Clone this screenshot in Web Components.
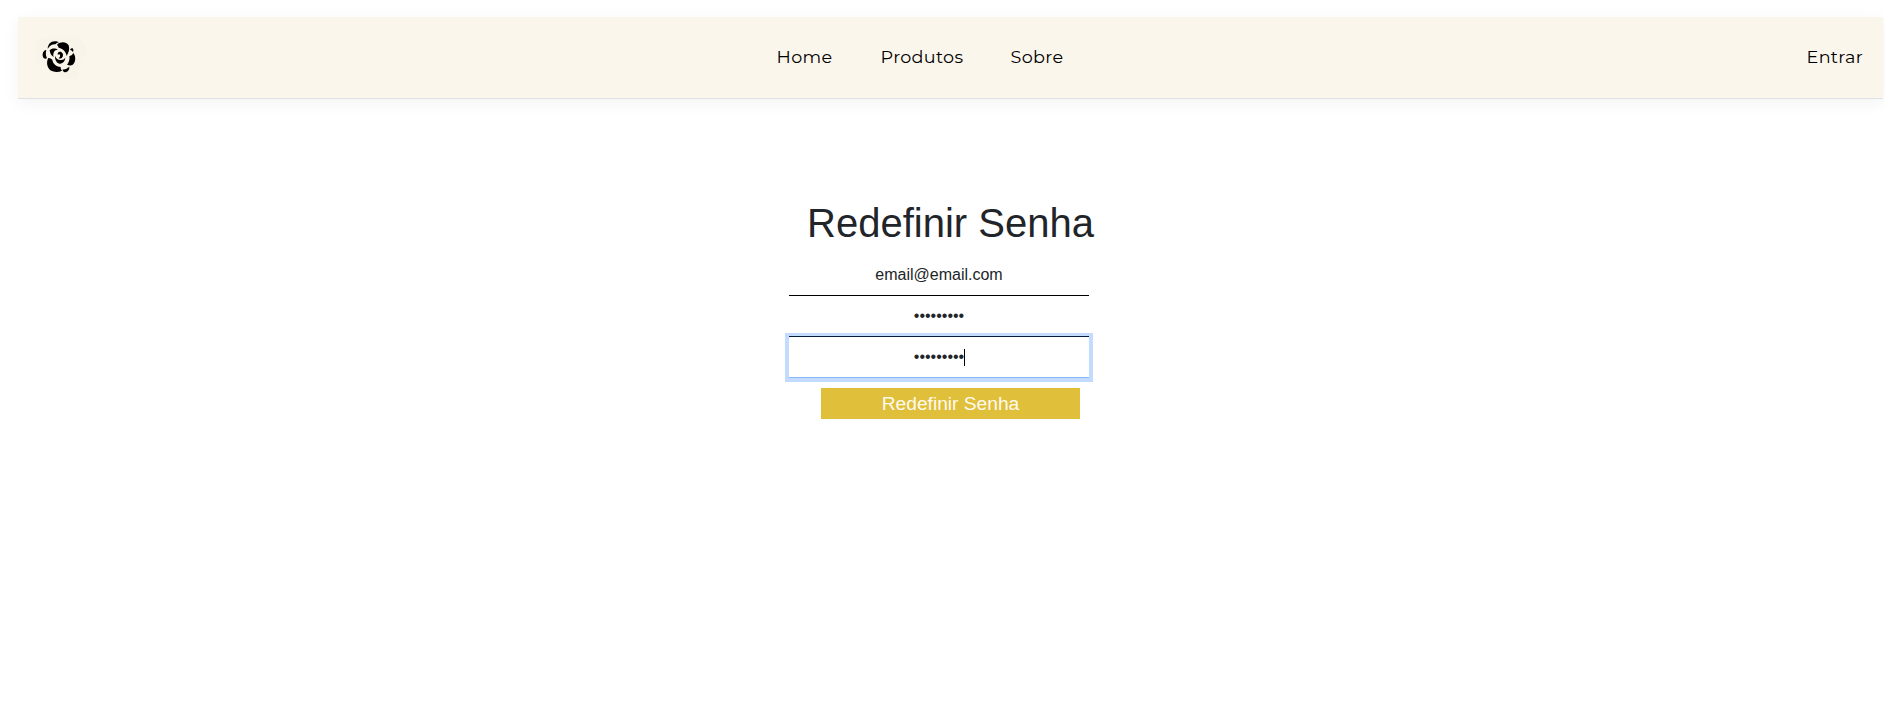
<!DOCTYPE html>
<html lang="pt-BR">
<head>
<meta charset="utf-8">
<title>Redefinir Senha</title>
<style>
body{margin:0;padding:17px 2px 0 18px;background:#fff;color:#212529;font-family:"Liberation Sans",Arial,sans-serif}
</style>
</head>
<body>
<site-header>
  <nav-link slot="nav" style="width:104px">Home</nav-link>
  <nav-link slot="nav" style="width:130px">Produtos</nav-link>
  <nav-link slot="nav">Sobre</nav-link>
  <nav-link slot="end">Entrar</nav-link>
</site-header>
<reset-form>
  <span slot="title">Redefinir Senha</span>
  <form-field>email@email.com</form-field>
  <form-field>•••••••••</form-field>
  <form-field active>•••••••••</form-field>
  <submit-button slot="action">Redefinir Senha</submit-button>
</reset-form>
<script>
function define(name, html){
  customElements.define(name, class extends HTMLElement{
    constructor(){ super(); this.attachShadow({mode:'open'}).innerHTML = html; }
  });
}
define('rose-logo', `<style>:host{display:block;width:35px;height:33px}svg{display:block;overflow:visible}</style>
<svg width="35" height="33" viewBox="126 120 105 99" fill="#000">
<path d="M105 122L170 105 240 112 262 150 240 180 236 238 190 234 110 185Z" fill="#f9f4ea"/>
<path d="M143 146C144 130 155 121 169 124L177 127Q170 129 166 133Q153 132 143 146Z"/>
<path d="M171 134C181 125 198 124 206 136C210 147 206 158 200 168C198 156 190 146 176 143Q174 137 171 134Z"/>
<path d="M210 149Q212 143 218 145Q223 151 219 157Q217 151 210 149Z"/>
<path d="M139 150C128 151 125 166 131 174Q135 178 141 175Q135 164 139 150Z"/>
<path d="M149 151C156 143 168 146 174 149Q163 149 161 158Q158 165 161 171Q150 165 149 151Z"/>
<path d="M220 159C229 170 227 188 217 195Q211 198 201 194Q211 182 208 169Q216 168 220 159Z"/>
<path d="M145 174C137 187 142 209 158 214Q173 219 186 212Q181 207 182 201C167 200 158 189 157 179Q151 173 145 174Z"/>
<path d="M187 209Q200 208 208 200Q209 213 197 217Q191 218 187 209Z"/>
<path d="M165 168C164 180 171 192 181 191C190 190 195 182 196 173Q191 181 182 180Q171 181 165 168Z"/>
<path d="M176 156C185 153 192 162 188 170Q184 178 176 175Q182 170 180 164Q178 161 173 164Q172 159 176 156Z"/>
</svg>`);
define('nav-link', `<style>:host{display:block;font:400 17.6px/24px Montserrat,Inter,sans-serif;letter-spacing:.3px;color:#000;white-space:nowrap}</style><slot></slot>`);
define('site-header', `<style>
:host{display:grid;grid-template-columns:758.6px 1fr auto;align-items:center;box-sizing:border-box;height:82px;background:#fbf6eb;border-bottom:1px solid #dee2e6;box-shadow:0 4px 16px rgba(0,0,0,.05);padding:0 20px 2px 0}
rose-logo{margin:0 0 0 24px}nav{display:flex}
</style><rose-logo></rose-logo><nav><slot name="nav"></slot></nav><slot name="end"></slot>`);
define('form-field', `<style>
:host{display:flex;align-items:center;justify-content:center;box-sizing:border-box;width:300px;height:41px;border-bottom:1px solid #000;font-size:16px;line-height:18px;color:#212529}
:host([active]){border-color:#86b7fe;box-shadow:0 0 0 4px rgba(13,110,253,.25)}
i{display:none;width:1px;height:17px;background:#000;margin-right:-1px}
:host([active]) i{display:block}
</style><slot></slot><i></i>`);
define('submit-button', `<style>
:host{display:block;width:259px;height:31px;background:#e0bf3a;color:#fffaf0;text-align:center;font-size:19.2px;line-height:31px}
</style><slot></slot>`);
define('reset-form', `<style>
:host{display:flex;flex-direction:column;align-items:flex-start;margin:100px 0 0 771px}
h1{font-weight:400;font-size:40px;line-height:48px;margin:0;width:323px;text-align:center;padding-bottom:8px}
.action{padding:10px 0 0 32px}
</style><h1><slot name="title"></slot></h1><slot></slot><div class="action"><slot name="action"></slot></div>`);
</script>
</body>
</html>
